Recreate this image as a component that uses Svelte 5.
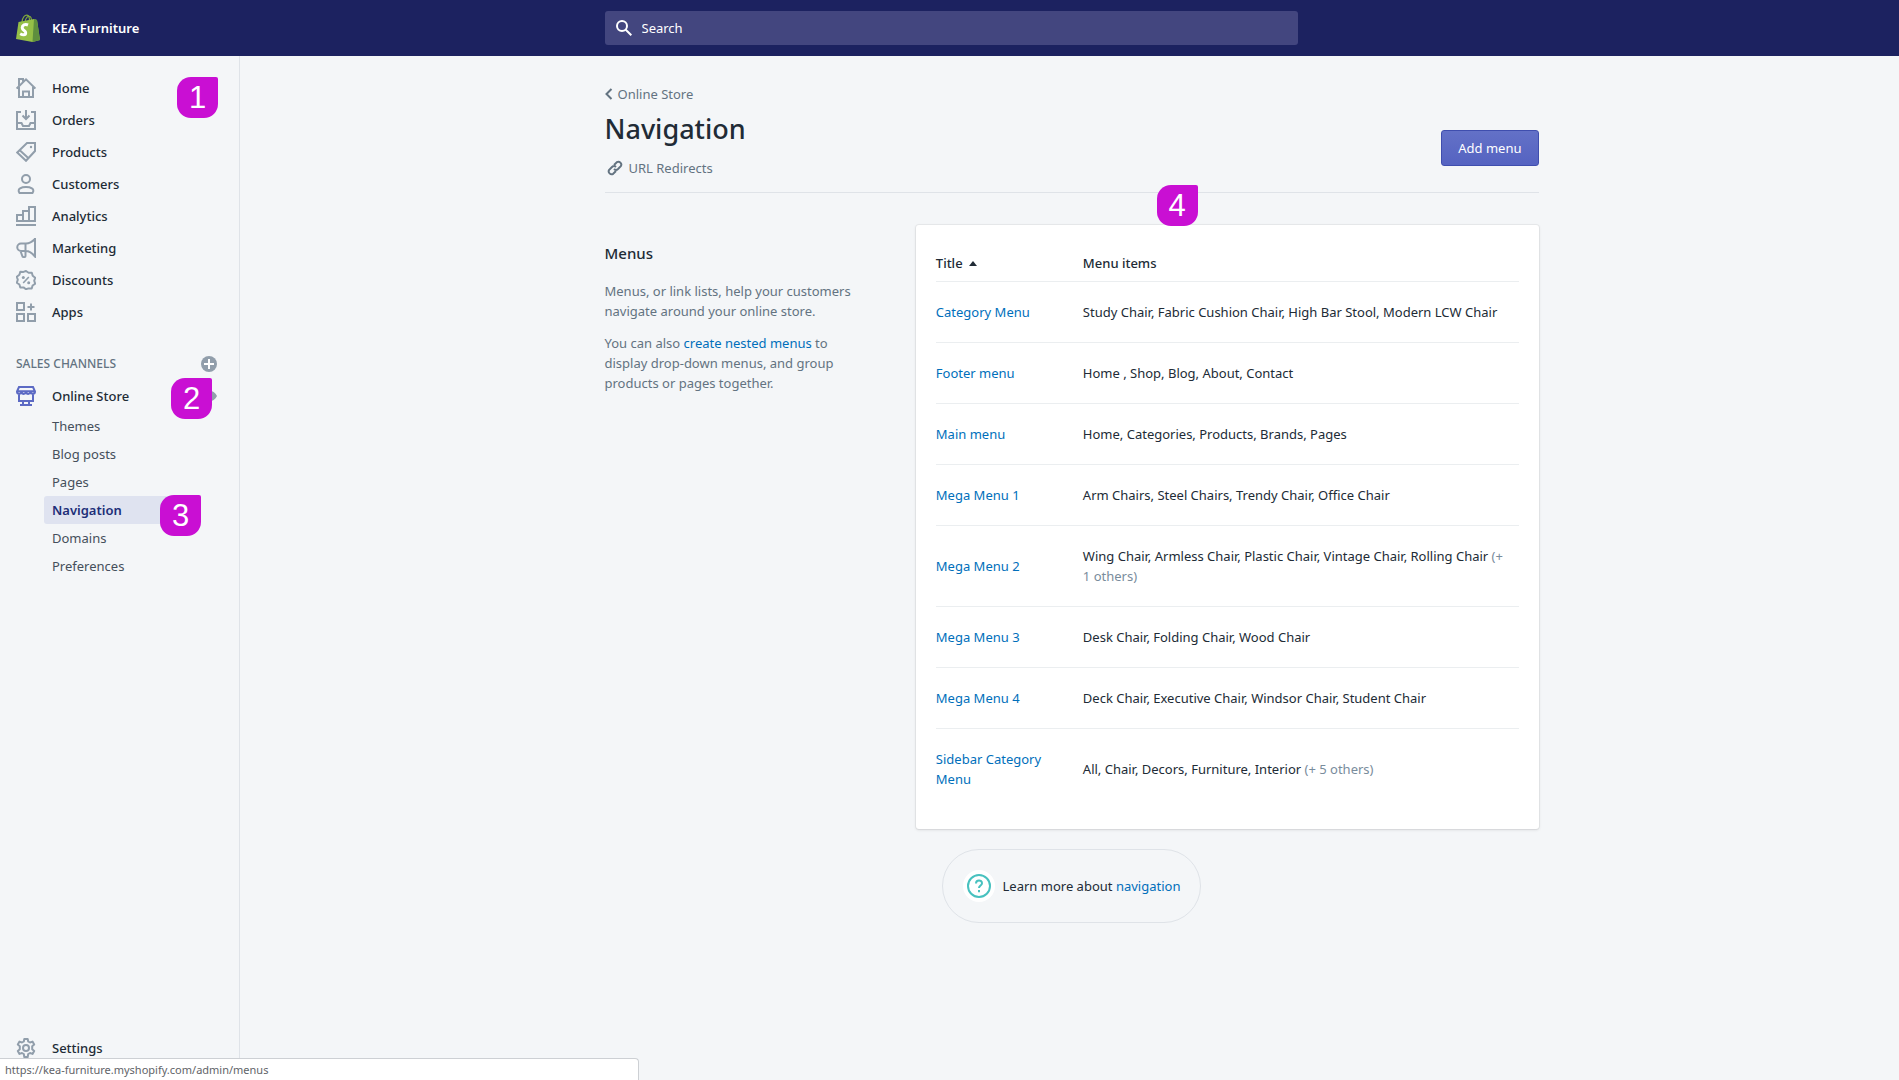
<script>
  const primary = [
    { label: 'Home', icon: 'home' },
    { label: 'Orders', icon: 'orders' },
    { label: 'Products', icon: 'products' },
    { label: 'Customers', icon: 'customers' },
    { label: 'Analytics', icon: 'analytics' },
    { label: 'Marketing', icon: 'marketing' },
    { label: 'Discounts', icon: 'discounts' },
    { label: 'Apps', icon: 'apps' }
  ];

  const storePages = ['Themes', 'Blog posts', 'Pages', 'Navigation', 'Domains', 'Preferences'];
  const current = 'Navigation';

  const menus = [
    { title: 'Category Menu', items: 'Study Chair, Fabric Cushion Chair, High Bar Stool, Modern LCW Chair' },
    { title: 'Footer menu', items: 'Home , Shop, Blog, About, Contact' },
    { title: 'Main menu', items: 'Home, Categories, Products, Brands, Pages' },
    { title: 'Mega Menu 1', items: 'Arm Chairs, Steel Chairs, Trendy Chair, Office Chair' },
    { title: 'Mega Menu 2', items: 'Wing Chair, Armless Chair, Plastic Chair, Vintage Chair, Rolling Chair', more: 1 },
    { title: 'Mega Menu 3', items: 'Desk Chair, Folding Chair, Wood Chair' },
    { title: 'Mega Menu 4', items: 'Deck Chair, Executive Chair, Windsor Chair, Student Chair' },
    { title: 'Sidebar Category Menu', items: 'All, Chair, Decors, Furniture, Interior', more: 5 }
  ];
</script>

{#snippet icon(name)}
  <svg class="icon" viewBox="0 0 20 20" aria-hidden="true">
    {#if name === 'home'}
      <path d="M.6 10.500 10 1.400 19.400 10.500M3 9V19h14V9M3 7.500V1h4v2.500M7 19v-5.500h6V19" />
    {:else if name === 'orders'}
      <path d="M5 2H1v17h18V2h-4M10 0v9M6.500 5.500 10 9l3.500-3.500M1 13h4.500l1.500 3h6l1.500-3H19" />
    {:else if name === 'products'}
      <path d="M11 1h8v8L10 18.800 1.200 10.500zM3.500 8l9 8.300" />
      <circle class="solid" cx="15" cy="5" r="1.200" />
    {:else if name === 'customers'}
      <circle cx="10" cy="5" r="4" />
      <path d="M3.500 19c-3-4.500 2.500-6 6.500-6s9.500 1.500 6.500 6z" />
    {:else if name === 'analytics'}
      <path d="M1 15V9h6v6zM7 15V5h6v10zM13 15V1h6v14zM0 19h20" />
    {:else if name === 'marketing'}
      <path d="M19 0v18.500C16.500 15.500 13.500 13 10 13H5a3.700 3.700 0 0 1 0-7.500h5C13.500 5.500 16.500 3.500 19 1M9.500 5.500V18c0 1.500-2.800 1.500-3.200 0L4.500 13" />
    {:else if name === 'discounts'}
      <path d="M10 1l2.600 1.800 3.200 0 .9 3 2.500 1.900-1 3 1 3-2.600 1.800-.9 3-3.200-.1L10 19.200l-2.500-1.800-3.200.1-.9-3L.8 12.700l1-3-1-3 2.600-1.900.9-3 3.200.1z" stroke-linejoin="round" />
      <path d="M7.200 13 12.800 7" stroke-width="1.600" />
      <circle class="solid" cx="7.300" cy="7.500" r="1.500" />
      <circle class="solid" cx="12.700" cy="12.700" r="1.500" />
    {:else if name === 'apps'}
      <path d="M1 1h7v7H1zM1 12h7v7H1zM12 12h7v7h-7zM15 1.500v7M11.500 5h7" />
    {:else if name === 'store'}
      <path d="M3 1h14l2 4.500c0 3-4 3-4.500.500-.500 2.500-4 2.500-4.500 0-.500 2.500-4 2.500-4.500 0C5 8.500 1 8.500 1 5.500zM1 5.300h18M3 8v7h14V8M7 15v4M13 15v4M4 19h12" />
    {:else if name === 'settings'}
      <path d="M8.300 1h3.400l.5 2.500 1.800 1 2.500-.9 1.700 3-2 1.700v2.900l2 1.700-1.700 3-2.500-.9-1.800 1-.5 3h-3.400l-.5-3-1.800-1-2.500.9-1.700-3 2-1.700V8.300l-2-1.700 1.700-3 2.500.9 1.800-1z" stroke-linejoin="round" />
      <circle cx="10" cy="10" r="3" />
    {/if}
  </svg>
{/snippet}

<div class="app">
  <header class="topbar">
    <a class="brand" href="#home">
      <svg class="bag" viewBox="0 0 24 28" aria-hidden="true">
        <path d="M6 8C6.500 3 9 1 11 1.200 13.500 1.500 13.500 5 13.500 7M9 8c.5-4 3-6.500 5-5.500 1.500.8 1.500 3 1.500 5" fill="none" stroke="#7fa83c" stroke-width="1.200" />
        <path d="M2.500 8 18 5l3 1 3 20-7.500 2L0 25z" fill="#95bf47" />
        <path d="M18 5l3 1 3 20-7.500 2z" fill="#5e8e3e" />
        <path d="M12 11c-3-1.300-5.800.2-5.800 2.700 0 2.800 3.700 2.800 3.500 5.100-.2 2.800-3 2.300-5.500.9" fill="none" stroke="#fff" stroke-width="3" />
      </svg>
      <span>KEA Furniture</span>
    </a>
    <div class="topbar-main">
      <div class="wrap">
        <label class="search">
          <svg viewBox="0 0 16 16" aria-hidden="true"><circle cx="6" cy="6" r="5" /><path d="M9.500 9.500 15.300 15.300" /></svg>
          <input type="search" placeholder="Search" aria-label="Search" />
        </label>
      </div>
    </div>
  </header>

  <div class="body">
    <nav class="sidebar" aria-label="Main">
      <ul class="primary">
        {#each primary as item}
          <li><a class="item" href="#{item.icon}">{@render icon(item.icon)}{item.label}</a></li>
        {/each}
      </ul>
      <span class="badge one">1</span>

      <div class="section">
        <h2>Sales channels</h2>
        <button class="round" aria-label="Add sales channel">
          <svg viewBox="0 0 16 16" aria-hidden="true"><circle class="disc" cx="8" cy="8" r="8" /><path d="M8 3v10M3 8h10" /></svg>
        </button>
      </div>
      <div class="channel">
        <a class="item active" href="#store">{@render icon('store')}Online Store</a>
        <button class="round" aria-label="View your online store">
          <svg viewBox="0 0 16 16" aria-hidden="true"><path class="disc" d="M0 8c3-7 13-7 16 0-3 7-13 7-16 0z" /><circle class="pupil" cx="8" cy="8" r="3" /></svg>
        </button>
        <span class="badge two">2</span>
      </div>
      <ul class="sub">
        {#each storePages as page}
          <li>
            <a href="#{page}" class:current={page === current} aria-current={page === current ? 'page' : undefined}>{page}</a>
            {#if page === current}<span class="badge three">3</span>{/if}
          </li>
        {/each}
      </ul>

      <div class="bottom">
        <a class="item" href="#settings">{@render icon('settings')}Settings</a>
      </div>
    </nav>

    <main>
      <div class="wrap">
        <div class="page-head">
          <div class="titles">
            <a class="crumb" href="#store">
              <svg viewBox="0 0 8 12" aria-hidden="true"><path d="M6.500 1 1.500 6l5 5" /></svg>Online Store
            </a>
            <h1>Navigation</h1>
            <a class="redirects" href="#redirects">
              <svg viewBox="0 0 16 16" aria-hidden="true"><path d="M7 5l2.800-2.800a2.900 2.900 0 0 1 4 4L11 9a2.900 2.900 0 0 1-4 0M9 11l-2.800 2.800a2.900 2.900 0 0 1-4-4L5 7a2.900 2.900 0 0 1 4 0" /></svg>URL Redirects
            </a>
          </div>
          <button class="add">Add menu</button>
          <span class="badge four">4</span>
        </div>

        <div class="columns">
          <section class="about">
            <h2>Menus</h2>
            <p>Menus, or link lists, help your customers navigate around your online store.</p>
            <p>You can also <a href="#nested">create nested menus</a> to display drop-down menus, and group products or pages together.</p>
          </section>

          <section class="card">
            <table>
              <thead>
                <tr>
                  <th class="name" aria-sort="ascending"><button class="sort">Title<svg viewBox="0 0 8 5" aria-hidden="true"><path d="M0 5 4 0l4 5z" /></svg></button></th>
                  <th>Menu items</th>
                </tr>
              </thead>
              <tbody>
                {#each menus as menu}
                  <tr>
                    <td class="name"><a href="#{menu.title}">{menu.title}</a></td>
                    <td>{menu.items} {#if menu.more}<span class="more">(+ {menu.more}&nbsp;others)</span>{/if}</td>
                  </tr>
                {/each}
              </tbody>
            </table>
          </section>
        </div>

        <footer class="help">
          <svg viewBox="0 0 32 32" aria-hidden="true">
            <circle class="halo" cx="16" cy="16" r="16" />
            <circle cx="16" cy="16" r="11" />
            <path d="M13 13.500c0-4 6-4 6-.3 0 2.300-3 2.300-3 4.800M16 20v2.300" />
          </svg>
          <p>Learn more about <a href="#learn">navigation</a></p>
        </footer>
      </div>
    </main>
  </div>

  <div class="status">https://kea-furniture.myshopify.com/admin/menus</div>
</div>

<style>
  :global(body) {
    background: #f4f6f8;
    color: #212b36;
    font: 13px/20px "Noto Sans", "Open Sans", sans-serif;
  }
  .app { display: flex; flex-direction: column; min-height: 100vh; }
  .app * { box-sizing: border-box; }
  a { color: #006fbb; text-decoration: none; }
  ul { list-style: none; margin: 0; padding: 0; }
  h1, h2, p { margin: 0; }
  button, input { font: inherit; color: inherit; border: 0; background: none; padding: 0; }

  .topbar { display: flex; height: 56px; background: #1c2260; color: #fff; }
  .brand { display: flex; align-items: center; gap: 12px; width: 240px; padding-left: 16px; color: #fff; font-weight: 600; }
  .bag { width: 24px; height: 28px; }
  .topbar-main, main { flex: 1; padding: 0 32px 0 36px; }
  .wrap { max-width: 934px; margin: 0 auto; }
  .search { display: flex; align-items: center; gap: 10px; max-width: 693px; height: 34px; margin-top: 11px; padding: 0 11px; border-radius: 3px; background: #43467f; }
  .search svg { width: 16px; height: 16px; fill: none; stroke: #fff; stroke-width: 2; }
  .search input { flex: 1; outline: 0; }
  .search input::placeholder { color: #fff; opacity: 1; }

  .body { display: flex; flex: 1; }
  .sidebar { position: relative; display: flex; flex-direction: column; width: 240px; padding: 16px 0; border-right: 1px solid #dfe3e8; }
  .item { display: flex; align-items: center; gap: 16px; height: 32px; padding-left: 16px; color: #212b36; font-weight: 500; }
  .icon { width: 20px; height: 20px; fill: none; stroke: #919eab; stroke-width: 2; }
  .icon .solid { fill: #919eab; stroke: none; }
  .active .icon { stroke: #5c6ac4; }
  .section { display: flex; align-items: center; justify-content: space-between; height: 32px; margin-top: 20px; padding: 0 22px 0 16px; }
  .section h2 { color: #637381; font-size: 12px; font-weight: 500; text-transform: uppercase; }
  .round { display: flex; }
  .round svg { width: 16px; height: 16px; stroke: #fff; stroke-width: 2; }
  .round .disc { fill: #919eab; stroke: none; }
  .round .pupil { fill: #f4f6f8; stroke: none; }
  .channel { position: relative; display: flex; align-items: center; justify-content: space-between; padding-right: 22px; }
  .sub li { position: relative; padding: 0 48px 0 44px; }
  .sub a { display: block; padding: 4px 8px; border-radius: 3px; color: #454f5b; }
  .sub a.current { background: #dfe3f0; color: #202e78; font-weight: 600; }
  .bottom { margin-top: auto; }

  .badge { position: absolute; width: 41px; height: 41px; border-radius: 14px 2px 14px 14px; background: #c90fd3; color: #fff; font: 31px/41px "Liberation Sans", Arial, sans-serif; text-align: center; }
  .one { top: 21px; left: 177px; }
  .two { top: -2px; left: 171px; }
  .three { top: -1px; left: 160px; z-index: 1; }
  .four { bottom: -34px; left: 552px; }

  .page-head { position: relative; display: flex; align-items: flex-end; justify-content: space-between; padding: 28px 0 14px; border-bottom: 1px solid #dfe3e8; }
  .titles { display: flex; flex-direction: column; align-items: flex-start; }
  .crumb, .redirects { display: flex; align-items: center; color: #637381; }
  .crumb { gap: 5px; }
  .crumb svg { width: 8px; height: 12px; fill: none; stroke: #637381; stroke-width: 2; }
  h1 { margin: 8px 0 12px; font-size: 27px; line-height: 34px; font-weight: 500; }
  .redirects { gap: 6px; padding-left: 2px; }
  .redirects svg { width: 16px; height: 16px; fill: none; stroke: #637381; stroke-width: 2; }
  .add { height: 36px; margin-bottom: 12px; padding: 0 16px; border: 1px solid #3f4eae; border-radius: 3px; background: linear-gradient(#6371c7, #5563c1); color: #fff; }

  .columns { display: grid; grid-template-columns: 1fr 2fr; align-items: start; padding-top: 32px; }
  .about { padding: 18px 52px 0 0; color: #637381; }
  .about h2 { margin-bottom: 18px; color: #212b36; font-size: 15px; font-weight: 500; }
  .about p { margin-bottom: 12px; }
  .card { padding: 20px; border-radius: 3px; background: #fff; box-shadow: 0 0 0 1px rgba(63, 63, 68, .06), 0 1px 3px 0 rgba(63, 63, 68, .15); }
  table { width: 100%; border-collapse: collapse; }
  th { padding: 8px 0; text-align: left; font-weight: 500; }
  td { padding: 20px 12px 20px 0; }
  tr { border-bottom: 1px solid #ebeef0; }
  tbody tr:last-child { border: 0; }
  .name { width: 147px; padding-right: 20px; }
  .sort { display: flex; align-items: center; gap: 6px; font-weight: 500; }
  .sort svg { width: 8px; height: 5px; fill: #212b36; }
  .more { color: #798c9c; }

  .help { display: flex; align-items: center; gap: 8px; width: fit-content; height: 74px; margin: 20px auto; padding: 0 20px; border: 1px solid #dfe3e8; border-radius: 37px; }
  .help svg { width: 32px; height: 32px; fill: none; stroke: #47c1bf; stroke-width: 2; }
  .help .halo { fill: #fff; stroke: none; }

  .status { position: fixed; bottom: 0; left: 0; width: 639px; height: 22px; padding-left: 5px; border: 1px solid #cdd0d4; border-width: 1px 1px 0 0; border-radius: 0 4px 0 0; background: #fff; color: #5f6368; font-size: 11px; line-height: 22px; }
</style>
